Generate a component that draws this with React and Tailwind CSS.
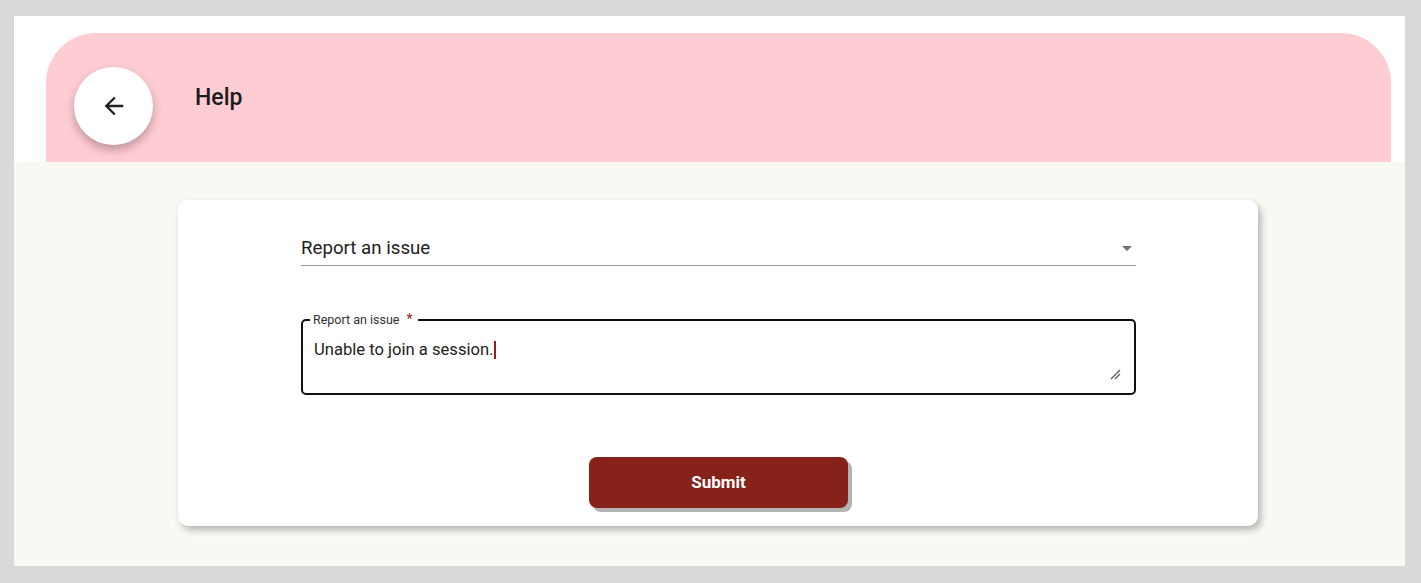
import { MdArrowBack } from 'react-icons/md';

const HelpPage = () => {
  return (
    <div className="min-h-screen bg-[#d9d9d9] pt-[16px] pb-[17px] pl-[14px] pr-[16px] font-['Roboto',sans-serif]">
      <div className="bg-white h-[550px] flex flex-col">
        {/* Header */}
        <div className="pt-[17px] pl-[32px] pr-[14px]">
          <div className="h-[129px] bg-[#fecdd3] rounded-t-[50px] flex items-start pt-[34px] pl-[28px]">
            <button className="w-[79px] h-[78px] rounded-full bg-white flex items-center justify-center shadow-[0_5px_10px_rgba(80,40,50,0.35)]">
              <MdArrowBack className="w-[28px] h-[28px] text-[#222]" />
            </button>
            <h1 className="ml-[42px] mt-[17px] text-[23px] leading-[28px] font-medium text-[#1c1c1c]">Help</h1>
          </div>
        </div>

        {/* Body */}
        <div className="flex-1 bg-[#f9f9f4] pt-[38px] pl-[164px]">
          <div className="w-[1080px] h-[326px] bg-white rounded-[10px] shadow-[3px_4px_7px_rgba(0,0,0,0.28)] pl-[123px] pr-[122px] pt-[32px] flex flex-col">
            {/* Select */}
            <div className="h-[34px] border-b border-[#999] flex items-center justify-between">
              <span className="text-[18.7px] text-[#222]">Report an issue</span>
              <span className="w-0 h-0 mr-[4px] border-l-[5px] border-r-[5px] border-t-[5px] border-l-transparent border-r-transparent border-t-[#707070]" />
            </div>

            {/* Textarea */}
            <div className="relative mt-[53px] h-[76px] border-2 border-[#111] rounded-[5px] pl-[11px] pt-[19px]">
              <span className="absolute left-[7px] -top-[9px] bg-white px-[3px] text-[12.5px] leading-[14px] text-[#333]">
                Report an issue <span className="text-[#8b2318] ml-[4px] mr-[2px] text-[14px]">*</span>
              </span>
              <div className="text-[16.6px] leading-[20px] text-[#222] flex items-center">
                Unable to join a session.
                <span className="inline-block w-[2px] h-[18px] bg-[#8b2318]" />
              </div>
              <svg className="absolute right-[13px] bottom-[13px]" width="11" height="11" viewBox="0 0 11 11">
                <path d="M1 10 L10 1 M5 10 L10 5" stroke="#555" strokeWidth="1.2" />
              </svg>
            </div>

            {/* Submit */}
            <div className="flex justify-center mt-[62px]">
              <button className="w-[259px] h-[51px] rounded-[8px] bg-[#86221a] text-white text-[17px] font-bold shadow-[4px_4px_0_#b3b3b3]">
                Submit
              </button>
            </div>
          </div>
        </div>
      </div>
    </div>
  );
};

export default function App() {
  return <HelpPage />;
}
